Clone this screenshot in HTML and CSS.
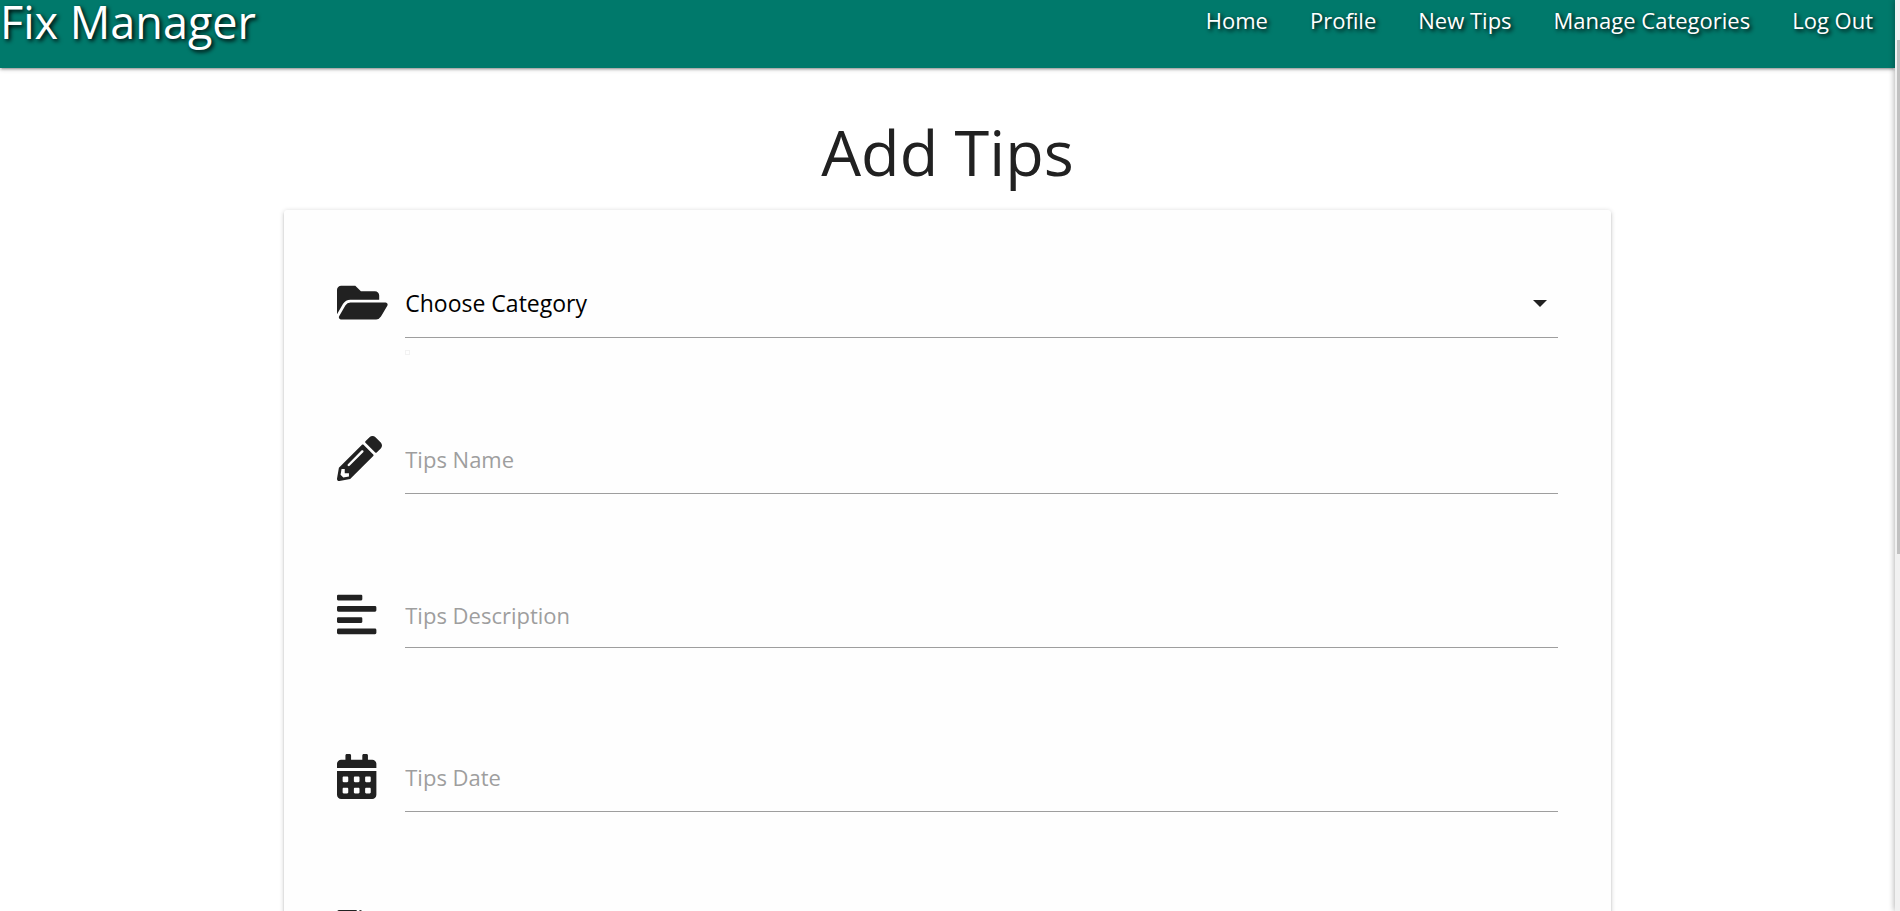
FILE: index.html
```
<!DOCTYPE html>
<html lang="en">
<head>
<meta charset="utf-8">
<title>Fix Manager</title>
<link rel="stylesheet" href="styles.css">
</head>
<body>
<div class="page">
  <nav class="navbar">
    <a class="brand" href="#">Fix Manager</a>
    <ul class="menu">
      <li><a href="#">Home</a></li>
      <li><a href="#">Profile</a></li>
      <li><a href="#">New Tips</a></li>
      <li><a href="#">Manage Categories</a></li>
      <li><a href="#">Log Out</a></li>
    </ul>
  </nav>
  <main>
    <h1 class="title">Add Tips</h1>
    <form class="card">
      <div class="row">
        <svg class="icon" viewBox="0 0 576 512" aria-hidden="true"><path d="M572.694 292.093L500.27 416.248A63.997 63.997 0 0 1 444.989 448H45.025c-18.523 0-30.064-20.093-20.731-36.093l72.424-124.155A64 64 0 0 1 152 256h399.964c18.523 0 30.064 20.093 20.73 36.093zM152 224h328v-48c0-26.51-21.49-48-48-48H272l-64-64H48C21.49 64 0 85.49 0 112v278.046l69.077-118.418C86.214 242.25 117.989 224 152 224z"/></svg>
        <div class="field field-select">
          <select class="control" aria-label="Category"><option>Choose Category</option></select>
          <svg class="caret" viewBox="0 0 14 7" aria-hidden="true"><path d="M0 0h14L7 7z"/></svg>
        </div>
      </div>
      <div class="row">
        <svg class="icon" viewBox="0 0 512 512" aria-hidden="true"><path d="M497.9 142.1l-46.1 46.1c-4.7 4.700-12.3 4.700-17 0l-111-111c-4.700-4.700-4.700-12.3 0-17l46.100-46.100c18.700-18.700 49.100-18.700 67.900 0l60.100 60.100c18.800 18.700 18.800 49.100 0 67.900zM284.200 99.800L21.600 362.400.4 483.900c-2.900 16.400 11.400 30.600 27.800 27.800l121.500-21.300 262.600-262.600c4.700-4.700 4.700-12.300 0-17l-111-111c-4.800-4.700-12.400-4.700-17.100 0zM124.100 339.900c-5.500-5.500-5.500-14.300 0-19.800l154-154c5.500-5.500 14.300-5.500 19.800 0s5.500 14.300 0 19.800l-154 154c-5.500 5.500-14.300 5.500-19.800 0zM88 424h48v36.300l-64.500 11.300-31.100-31.100L51.700 376H88v48z"/></svg>
        <div class="field"><input class="control" type="text" placeholder="Tips Name" aria-label="Tips Name"></div>
      </div>
      <div class="row row-text">
        <svg class="icon" viewBox="0 0 448 512" aria-hidden="true"><path d="M12.830 352h262.340A12.820 12.820 0 0 0 288 339.170v-38.340A12.820 12.820 0 0 0 275.170 288H12.830A12.820 12.820 0 0 0 0 300.830v38.340A12.820 12.820 0 0 0 12.830 352zm0-256h262.340A12.820 12.820 0 0 0 288 83.170V44.830A12.820 12.820 0 0 0 275.170 32H12.830A12.820 12.820 0 0 0 0 44.830v38.340A12.820 12.820 0 0 0 12.830 96zM432 160H16a16 16 0 0 0-16 16v32a16 16 0 0 0 16 16h416a16 16 0 0 0 16-16v-32a16 16 0 0 0-16-16zm0 256H16a16 16 0 0 0-16 16v32a16 16 0 0 0 16 16h416a16 16 0 0 0 16-16v-32a16 16 0 0 0-16-16z"/></svg>
        <div class="field"><textarea class="control" rows="1" placeholder="Tips Description" aria-label="Tips Description"></textarea></div>
      </div>
      <div class="row">
        <svg class="icon" viewBox="0 0 448 512" aria-hidden="true"><path d="M0 464c0 26.500 21.500 48 48 48h352c26.500 0 48-21.500 48-48V192H0v272zm320-196c0-6.600 5.400-12 12-12h40c6.600 0 12 5.400 12 12v40c0 6.600-5.400 12-12 12h-40c-6.600 0-12-5.400-12-12v-40zm0 128c0-6.600 5.400-12 12-12h40c6.600 0 12 5.400 12 12v40c0 6.600-5.400 12-12 12h-40c-6.600 0-12-5.400-12-12v-40zM192 268c0-6.600 5.400-12 12-12h40c6.600 0 12 5.400 12 12v40c0 6.600-5.400 12-12 12h-40c-6.600 0-12-5.400-12-12v-40zm0 128c0-6.600 5.400-12 12-12h40c6.600 0 12 5.400 12 12v40c0 6.600-5.400 12-12 12h-40c-6.600 0-12-5.400-12-12v-40zM64 268c0-6.600 5.400-12 12-12h40c6.600 0 12 5.400 12 12v40c0 6.600-5.400 12-12 12H76c-6.600 0-12-5.400-12-12v-40zm0 128c0-6.600 5.400-12 12-12h40c6.600 0 12 5.400 12 12v40c0 6.600-5.400 12-12 12H76c-6.600 0-12-5.400-12-12v-40zM400 64h-48V16c0-8.800-7.200-16-16-16h-32c-8.800 0-16 7.200-16 16v48H160V16c0-8.800-7.200-16-16-16h-32c-8.800 0-16 7.200-16 16v48H48C21.500 64 0 85.500 0 112v48h448v-48c0-26.500-21.500-48-48-48z"/></svg>
        <div class="field"><input class="control" type="text" placeholder="Tips Date" aria-label="Tips Date"></div>
      </div>
      <div class="row">
        <svg class="icon" viewBox="0 0 384 512" aria-hidden="true"><path d="M224 136V0H24C10.700 0 0 10.700 0 24v464c0 13.300 10.700 24 24 24h336c13.300 0 24-10.700 24-24V160H248c-13.200 0-24-10.800-24-24zm160-14.100v6.100H256V0h6.100c6.400 0 12.500 2.500 17 7l97.900 98c4.500 4.500 7 10.600 7 16.900z"/></svg>
        <div class="field"><input class="control" type="text" aria-label="Attachment"></div>
      </div>
    </form>
  </main>
</div>
<div class="scrollbar"><div class="thumb"></div></div>
</body>
</html>
```
FILE: styles.css
```
* {
  box-sizing: border-box;
}

body {
  margin: 0;
  height: 100vh;
  display: flex;
  overflow: hidden;
  background: #fff;
  color: #212121;
  font-family: "Segoe UI", "Open Sans", "Noto Sans", sans-serif;
  font-size: 22px;
}

.page {
  flex: 1;
  min-width: 0;
  overflow: hidden;
}

.navbar {
  display: flex;
  justify-content: space-between;
  align-items: flex-start;
  height: 68px;
  background: #00796b;
  box-shadow: 0 2px 2px rgba(0, 0, 0, 0.14), 0 3px 1px -2px rgba(0, 0, 0, 0.12), 0 1px 5px rgba(0, 0, 0, 0.2);
}

.navbar a {
  color: #fff;
  text-decoration: none;
  text-shadow: 2px 2px 4px #000;
}

.brand {
  font-size: 45px;
  line-height: 44px;
}

.menu {
  display: flex;
  margin: 0;
  padding: 0 1px 0 0;
  list-style: none;
  line-height: 40px;
}

.menu a {
  display: block;
  padding: 0 21px;
}

.title {
  margin: 42px 0 16px;
  font-size: 63px;
  font-weight: 400;
  line-height: 84px;
  text-align: center;
}

.card {
  width: 70%;
  margin: 0 auto;
  padding: 60px 53px;
  border-radius: 3px;
  background: #fefefe;
  box-shadow: 0 2px 2px rgba(0, 0, 0, 0.14), 0 3px 1px -2px rgba(0, 0, 0, 0.12), 0 1px 5px rgba(0, 0, 0, 0.2);
}

.row {
  display: grid;
  grid-template-columns: 68px 1fr;
  margin-bottom: 88px;
}

.row-text {
  margin-bottom: 96px;
}

.icon {
  height: 45px;
  margin-top: 10px;
  fill: #212121;
}

.field {
  position: relative;
  display: flex;
}

.control {
  flex: 1;
  min-width: 0;
  height: 68px;
  margin: 0;
  padding: 0 0 2px;
  border: 0;
  border-bottom: 1px solid #9e9e9e;
  border-radius: 0;
  outline: 0;
  background: transparent;
  color: #000;
  font: inherit;
  appearance: none;
}

.control::placeholder {
  color: #9e9e9e;
}

select.control {
  font-size: 23px;
}

textarea.control {
  height: 66px;
  padding: 18px 0;
  line-height: 30px;
  overflow: hidden;
  resize: none;
}

.caret {
  position: absolute;
  right: 11px;
  top: 30px;
  width: 14px;
  height: 7px;
  fill: #212121;
}

.field-select::after {
  content: "";
  position: absolute;
  left: 0;
  top: 80px;
  width: 3px;
  height: 3px;
  border: 1px solid #f2f2f2;
}

.scrollbar {
  position: relative;
  width: 5px;
  padding: 40px 0 0 2px;
  background: #f1f1f1;
  box-shadow: 0 0 6px rgba(0, 0, 0, 0.4);
}

.thumb {
  height: 59%;
  background: #c1c1c1;
}
```
